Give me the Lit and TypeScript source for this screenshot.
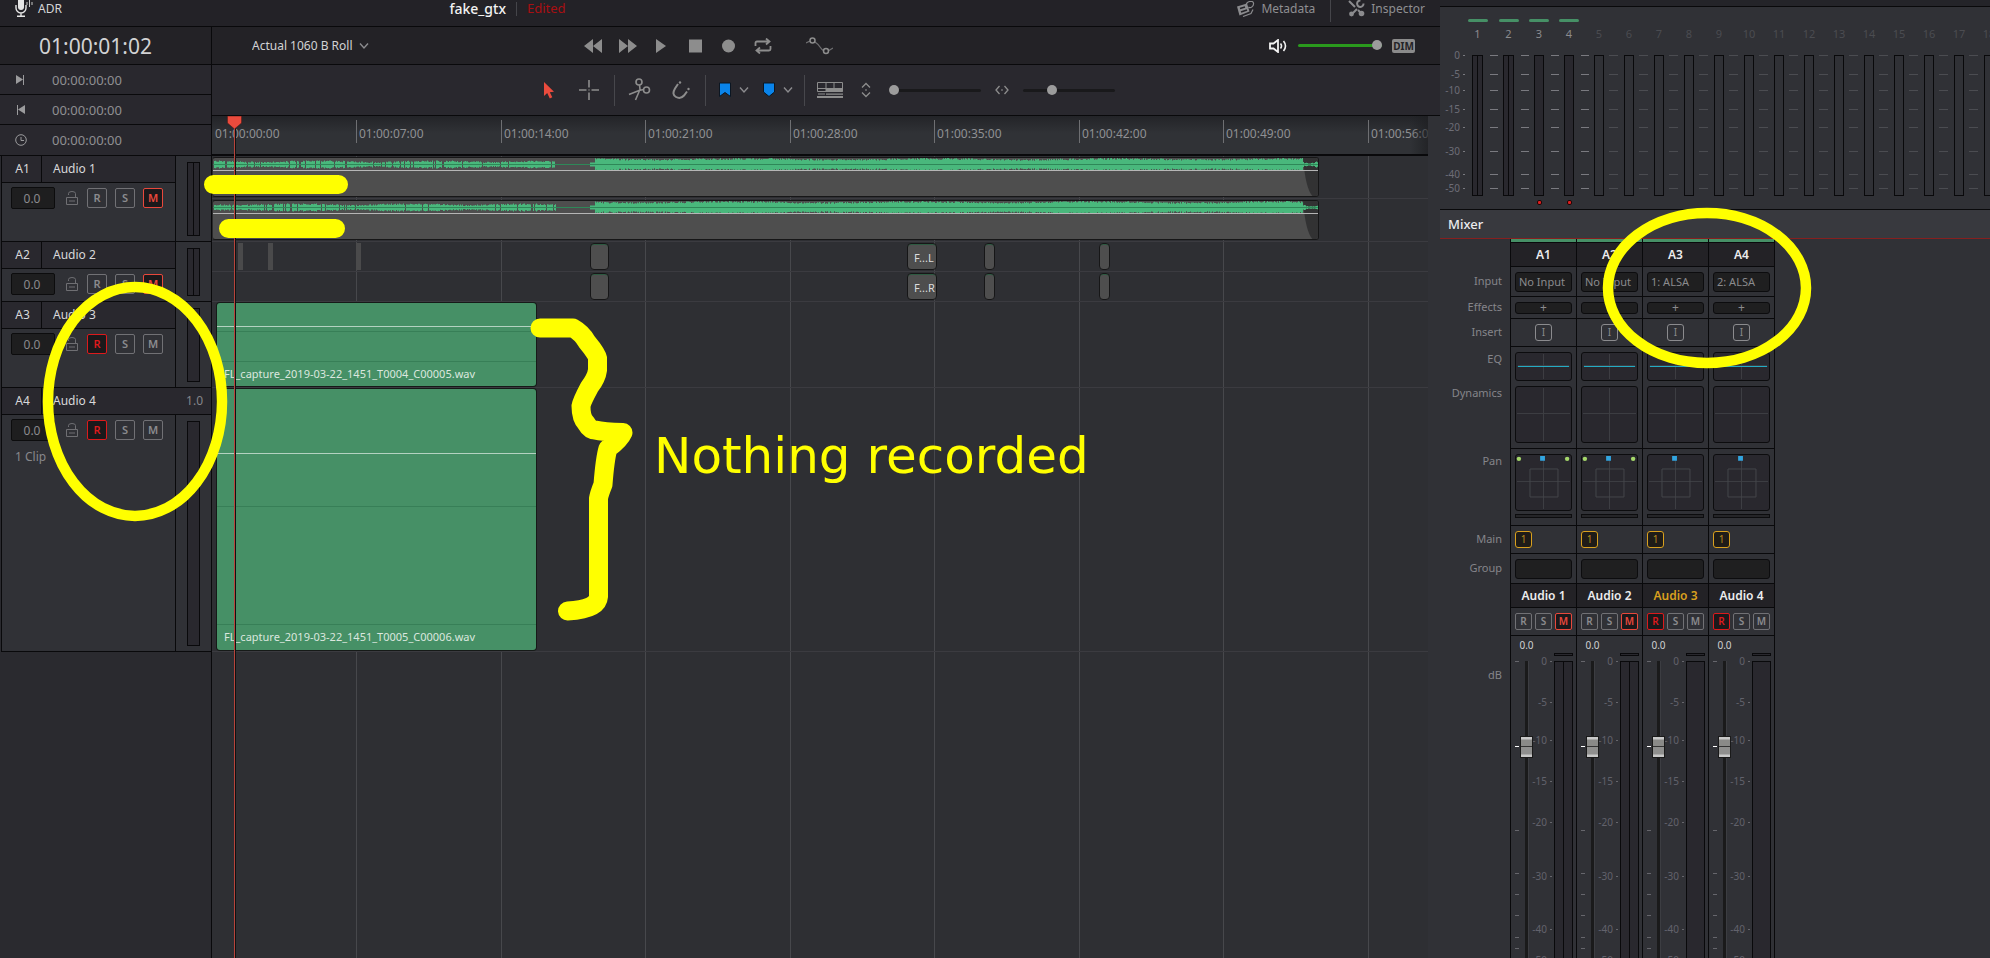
import { LitElement, html, css, svg, nothing } from "lit";
import { customElement, property } from "lit/decorators.js";
import { classMap } from "lit/directives/class-map.js";

const base = css`
  :host { display: block; }
  *, *::before, *::after { box-sizing: border-box; }
  button, input, select {
    font: inherit; color: inherit; margin: 0; padding: 0;
    border: 0; background: none; appearance: none; border-radius: 0; outline: none;
  }
  svg { display: block; flex: none; }
  .rsm {
    display: grid; place-items: center; border: 1px solid #717175; border-radius: 2px;
    color: #8b8b8e; font-weight: 600; flex: none;
  }
  .rsm.mute { color: #e8483c; border-color: #e8483c; background: #1b191b; }
  .rsm.rec { color: #dc1a1c; border-color: #dc1a1c; background: #1b191b; }
`;

interface Track {
  id: string; name: string; stereo: boolean; rec: boolean; mute: boolean;
  height: number; input: string; channels?: string; clips?: string;
}
const tracks: Track[] = [
  { id: "A1", name: "Audio 1", stereo: true, rec: false, mute: true, height: 86, input: "No Input" },
  { id: "A2", name: "Audio 2", stereo: true, rec: false, mute: true, height: 60, input: "No Input" },
  { id: "A3", name: "Audio 3", stereo: false, rec: true, mute: false, height: 86, input: "1: ALSA" },
  { id: "A4", name: "Audio 4", stereo: false, rec: true, mute: false, height: 264, input: "2: ALSA", channels: "1.0", clips: "1 Clip" },
];

const chevron = svg`<path d="M1 1.5 5 6 9 1.5" fill="none" stroke="#8b8b8e" stroke-width="1.4"/>`;

/* ---------- top bars ---------- */
@customElement("top-bars")
class TopBars extends LitElement {
  static styles = [base, css`
    :host { background: #232227; color: #8f8f92; font-size: 13px; line-height: 17px; }
    .title { height: 27px; border-bottom: 1px solid #09090b; display: grid; grid-template-columns: 31% auto 1fr; }
    .title > div { display: flex; height: 17px; align-items: center; }
    .adr { color: #d5d5d7; font-size: 12px; padding-left: 15px; gap: 5px; display: flex; align-items: center; }
    .name { color: #f2f2f2; font-size: 14px; font-weight: 500; padding: 0 10px 0 3px; border-right: 1px solid #45454a; line-height: 14px; }
    .edited { color: #a80f12; font-size: 13px; padding-left: 10px; }
    .tools { justify-content: flex-end; padding-right: 15px; }
    .tools button { display: flex; align-items: center; gap: 6px; font-size: 12px; }
    .tools i { width: 1px; height: 22px; background: #45454a; margin: 5px 17px 0 15px; }
  `];
  render() {
    return html`<header class="title">
      <div><button class="adr">
        <svg width="18" height="17" viewBox="0 0 18 17"><rect x="3" y="-5" width="6" height="15" rx="3" fill="#e6e6e6"/><path d="M1 5v3a5 5 0 0 0 10 0V5M6 13v3M2 16.3h8" fill="none" stroke="#e6e6e6" stroke-width="1.4"/><path d="M12 2v3M14.5 0v7M17 2v3" stroke="#c8c8c8"/></svg>ADR</button></div>
      <div><span class="name">fake_gtx</span><span class="edited">Edited</span></div>
      <div class="tools">
        <button><svg width="19" height="16" viewBox="0 0 19 16"><path d="M1 5.500 11 2.500l2.500 8-10 4Z" fill="#8b8b8e"/><path d="M4 7.500 9 6M5 11l6-2" stroke="#232227" stroke-width="1.600"/><path d="M10 5c0-5 7-6 7.500-3 .5 3-3 6-5 4M7 15.500l8-3 2-4" fill="none" stroke="#8b8b8e" stroke-width="1.200"/></svg>Metadata</button>
        <i></i>
        <button><svg width="17" height="17" viewBox="0 0 17 17"><path d="M1 1l6 6M10 10l5 5M3 15l6-6" stroke="#8b8b8e" stroke-width="2"/><path d="M15.500 3.500a3.200 3.200 0 1 1-3-3" fill="none" stroke="#8b8b8e" stroke-width="2"/><circle cx="3.500" cy="14" r="2.400" fill="#8b8b8e"/><circle cx="13.500" cy="13.500" r="2.800" fill="#8b8b8e"/></svg>Inspector</button>
      </div>
    </header>`;
  }
}

@customElement("transport-bar")
class TransportBar extends LitElement {
  static styles = [base, css`
    .row, .bar { display: flex; align-items: center; }
    .row { height: 38px; background: #232226; border-bottom: 1px solid #09090b; padding-left: 40px; }
    .bar { height: 51px; background: #29282e; border-bottom: 1px solid #09090b; padding-left: 331px; }
    .seq { width: 332px; display: flex; align-items: center; color: #d2d2d4; font-size: 12px; }
    .seq select { width: 107px; line-height: 18px; height: 18px; }
    .keys { display: flex; align-items: center; gap: 17px; flex: 1; }
    .keys .curve { margin-left: 17px; }
    .vol { display: flex; align-items: center; gap: 10px; padding-right: 25px; }
    .dim { width: 23px; height: 14px; border-radius: 2px; background: #8b8b8b; color: #232226; font: 700 10px/14px "Noto Sans"; }
    .sep { width: 1px; height: 31px; background: #47474c; flex: none; }
    .g1 { display: flex; align-items: center; gap: 24px; margin-right: 15px; }
    .g2 { display: flex; align-items: center; gap: 21px; margin: 0 15px 0 13px; }
    .g3 { display: flex; align-items: center; gap: 8px; margin: 0 11px 0 13px; }
    .g3 button:nth-child(2) { margin-right: 6px; }
    .g4 { display: flex; align-items: center; gap: 18px; margin-left: 12px; }
    .wide { margin: 0 -4px; }
    input[type="range"] { height: 12px; width: 92px; }
    input::-webkit-slider-runnable-track { height: 3px; background: #19191b; border-radius: 2px; }
    input::-webkit-slider-thumb { appearance: none; width: 10px; height: 10px; border-radius: 50%; background: #9c9c9c; margin-top: -4px; }
    input.green { width: 84px; }
    input.green::-webkit-slider-runnable-track { background: #2a9a1d; }
  `];
  render() {
    const g = "#8d8d8d";
    return html`
    <div class="row">
      <label class="seq"><select aria-label="Timeline"><option>Actual 1060 B Roll</option></select><svg width="10" height="8">${chevron}</svg></label>
      <div class="keys">
        <button aria-label="Rewind"><svg width="18" height="14"><path d="M9 0v14L0 7ZM18 0v14L9 7Z" fill=${g}/></svg></button>
        <button aria-label="Fast forward"><svg width="18" height="14"><path d="M0 0v14l9-7ZM9 0v14l9-7Z" fill=${g}/></svg></button>
        <button aria-label="Play"><svg width="16" height="14"><path d="M2 0v14l10-7Z" fill=${g}/></svg></button>
        <button aria-label="Stop"><svg width="16" height="14"><path d="M2 .5h13v13H2Z" fill=${g}/></svg></button>
        <button aria-label="Record"><svg width="17" height="14"><circle cx="8.500" cy="7" r="6.500" fill=${g}/></svg></button>
        <button aria-label="Loop"><svg width="18" height="16" viewBox="0 0 18 16"><path d="M1.500 8V5q0-1.500 1.500-1.500h12M12 .5l3.500 3-3.500 3M16.500 8v3q0 1.500-1.500 1.500H3M6 9.500l-3.500 3 3.500 3" fill="none" stroke=${g} stroke-width="1.800"/></svg></button>
        <button class="curve" aria-label="Automation"><svg width="27" height="18" viewBox="0 0 27 18"><path d="M0 6 4 4M9 5q3 2 5 5t4 4M22 14l5-3" fill="none" stroke="#6e6e70" stroke-width="1.300"/><circle cx="6.500" cy="3.500" r="2.500" fill="none" stroke=${g} stroke-width="1.500"/><circle cx="20" cy="14" r="2.500" fill="none" stroke=${g} stroke-width="1.500"/></svg></button>
      </div>
      <div class="vol">
        <button aria-label="Monitor"><svg width="19" height="14" viewBox="0 0 19 14"><path d="M1 4.500h3.500L9 1v12L4.500 9.500H1Z" fill="none" stroke="#f2f2f2" stroke-width="1.800"/><path d="M11.500 4.500q2 2.500 0 5M14.500 2q4 5 0 10" fill="none" stroke="#f2f2f2" stroke-width="1.600"/></svg></button>
        <input class="green" type="range" aria-label="Monitor volume" value="100" />
        <button class="dim">DIM</button>
      </div>
    </div>
    <div class="bar">
      <div class="g1">
        <button aria-label="Select"><svg width="12" height="18"><path d="M1 1v14l3.200-3 2.600 5.500 2.500-1.200-2.500-5 4.200-.5Z" fill="#ea4b3d"/></svg></button>
        <button aria-label="Range"><svg width="20" height="20"><path d="M10 0v7.500M10 12.500V20M0 10h7.500M12.500 10H20M9.500 10h1" stroke=${g} stroke-width="1.600"/></svg></button>
      </div>
      <i class="sep"></i>
      <div class="g2">
        <button aria-label="Razor"><svg width="23" height="24" viewBox="0 0 23 24"><circle cx="11" cy="4" r="3" fill="none" stroke=${g} stroke-width="1.600"/><circle cx="18.500" cy="12" r="3" fill="none" stroke=${g} stroke-width="1.600"/><path d="M11.500 7 12 11.500 7.500 22M15.500 11.500 11 12.500 1 16.500" fill="none" stroke=${g} stroke-width="1.600"/></svg></button>
        <button aria-label="Snapping"><svg width="18" height="20" viewBox="0 0 18 20"><path d="M6 4 3 8.500q-3.500 6 1 8.500t8-1.500l3-4" fill="none" stroke=${g} stroke-width="2"/><circle cx="8" cy="2.500" r="1.200" fill=${g}/><circle cx="16.500" cy="9" r="1.200" fill=${g}/></svg></button>
      </div>
      <i class="sep"></i>
      <div class="g3">
        <button aria-label="Flag"><svg width="12" height="16"><path d="M.5 1h11v13.500L6 10.500.5 14.500Z" fill="#0a84ea" stroke="#0b1622"/></svg></button>
        <button aria-label="Flag colour"><svg width="10" height="8">${chevron}</svg></button>
        <button aria-label="Marker"><svg width="12" height="16"><path d="M.5 1h11v9L6 14.500.5 10Z" fill="#0a84ea" stroke="#0b1622"/></svg></button>
        <button aria-label="Marker colour"><svg width="10" height="8">${chevron}</svg></button>
      </div>
      <i class="sep"></i>
      <div class="g4">
        <button aria-label="Track layout"><svg width="26" height="16" viewBox="0 0 26 16"><path d="M.5.5h25v9H.5ZM9 0v10M17 0v6" fill="none" stroke=${g}/><path d="M9 6h17v3.500H9ZM1 11.500h7v1H1ZM9 11.500h17v1.200H9ZM0 14h26v2H0Z" fill=${g}/><path d="M0 6.500h9" stroke=${g}/></svg></button>
        <svg width="10" height="16"><path d="M1 5.500 5 1.500 9 5.500M1 10.500 5 14.500 9 10.500M4.300 8h1.400" fill="none" stroke=${g} stroke-width="1.300"/></svg>
        <input type="range" aria-label="Vertical zoom" value="0" />
        <svg class="wide" width="14" height="10"><path d="M4.500 1 1 5l3.500 4M9.500 1 13 5 9.500 9M6.300 5h1.400" fill="none" stroke=${g} stroke-width="1.300"/></svg>
        <input type="range" aria-label="Horizontal zoom" value="29" />
      </div>
    </div>`;
  }
}

/* ---------- left column ---------- */
@customElement("counter-panel")
class CounterPanel extends LitElement {
  static styles = [base, css`
    :host { background: #29282e; }
    .big { height: 38px; background: #232226; border-bottom: 1px solid #09090b; color: #d2d2d4; font-size: 21px; line-height: 38px; padding-left: 39px; }
    .tc { height: 30px; border-bottom: 1px solid #09090b; display: flex; align-items: center; color: #8f8f92; font-size: 13px; padding-left: 15px; }
    .tc:last-child { height: 31px; }
    .tc svg { margin-right: 25px; }
  `];
  render() {
    const g = "#9b9b9d";
    return html`<div class="big">01:00:01:02</div>
      <div class="tc"><svg width="12" height="12"><path d="M1 1v9l7-4.500Z" fill=${g}/><path d="M8.500 1v10" stroke=${g}/></svg>00:00:00:00</div>
      <div class="tc"><svg width="12" height="12"><path d="M10 1v9L3 5.500Z" fill=${g}/><path d="M2.500 1v10" stroke=${g}/></svg>00:00:00:00</div>
      <div class="tc"><svg width="12" height="12"><circle cx="6" cy="6" r="5.300" fill="none" stroke=${g}/><path d="M6 3v3.500h3" fill="none" stroke=${g}/></svg>00:00:00:00</div>`;
  }
}

@customElement("track-head")
class TrackHead extends LitElement {
  @property({ attribute: false }) track!: Track;
  static styles = [base, css`
    .track { display: grid; grid-template-columns: 1fr 35px; grid-template-rows: 27px 1fr; background: #303136; border-bottom: 1px solid #09090b; margin-left: 1px; border-left: 1px solid #09090b; font-size: 12px; height: 100%; }
    .head { grid-column: 1; display: flex; line-height: 26px; background: #29282e; color: #d8d8da; border-bottom: 1px solid #09090b; border-right: 1px solid #09090b; }
    .wide .head { grid-column: 1 / 3; border-right: 0; }
    .id { width: 40px; flex: none; padding-left: 2px; text-align: center; border-right: 1px solid #09090b; }
    .name { padding-left: 11px; flex: 1; }
    .ch { color: #85858a; padding-right: 8px; }
    .body { grid-column: 1; border-right: 1px solid #09090b; padding: 4px 0 0 9px; }
    .line { display: flex; align-items: center; gap: 8px; }
    .gain { width: 44px; height: 22px; background: #1e1e1f; border: 1px solid #0c0c0d; border-radius: 2px; text-align: center; color: #8b8b8e; margin-right: 3px; padding-right: 2px; }
    .lock { margin-right: 1px; }
    .rsm { width: 20px; height: 20px; font-size: 11px; line-height: 18px; }
    .clips { color: #88888c; padding: 7px 4px; line-height: 18px; }
    .side { grid-column: 2; grid-row: 1 / 3; padding: 6px 11px 5px; display: flex; }
    .wide .side { grid-row: 2; }
    .meter { flex: 1; background: #29282e; border: 1px solid #09090b; display: flex; }
    .meter i { flex: 1; border-right: 1px solid #09090b; }
    .meter i:last-child { border-right: 0; }
  `];
  render() {
    const t = this.track;
    return html`<section class=${classMap({ track: true, wide: !!t.channels })}>
      <div class="head"><span class="id">${t.id}</span><span class="name">${t.name}</span>${t.channels ? html`<span class="ch">${t.channels}</span>` : nothing}</div>
      <div class="body">
        <div class="line">
          <input class="gain" type="text" value="0.0" aria-label="${t.name} gain" />
          <button class="lock" aria-label="Lock"><svg width="12" height="14"><path d="M.5 6.500h11v7H.5ZM2.500 4V2.500q0-2 3.500-2t3.500 2v4M3 10h6" fill="none" stroke="#6f6f73"/></svg></button>
          <button class=${classMap({ rsm: true, rec: t.rec })}>R</button>
          <button class="rsm">S</button>
          <button class=${classMap({ rsm: true, mute: t.mute })}>M</button>
        </div>
        ${t.clips ? html`<div class="clips">${t.clips}</div>` : nothing}
      </div>
      <div class="side"><div class="meter"><i></i>${t.stereo ? html`<i></i>` : nothing}</div></div>
    </section>`;
  }
}

/* ---------- timeline ---------- */
const TICK = 289; // pixels per fourteen seconds
const marks = ["00", "07", "14", "21", "28", "35", "42", "49", "56"].map((s, i) => ({
  label: `01:00:${s}:00`, x: Math.floor((i * TICK) / 2),
}));

const MID = 6.5;
function waveform(seed: number): string {
  let s = seed;
  const rnd = () => ((s = (s * 16807) % 2147483647) / 2147483647);
  let up = `M0 ${MID}`, down = "";
  for (let x = 0; x < 1106; x++) {
    let a: number;
    if (x < 343) {
      const swell = 1.2 + Math.abs(Math.sin(x / 37 + seed)) * 1.3;
      a = rnd() < 0.1 ? 0.6 : swell + rnd() * 1.6;
    } else if (x < 377) a = 0.5;
    else if (x < 382) a = 2;
    else if (x < 1090) a = 4.2 + Math.sin(x / 29 + seed) * 0.5 + rnd() * 1.9;
    else a = 1 + (Math.abs(x - 1096) / 3) * rnd();
    up += `L${x} ${(MID - a).toFixed(1)}L${x + 1} ${(MID - a).toFixed(1)}`;
    down = `L${x + 1} ${(MID + a).toFixed(1)}L${x} ${(MID + a).toFixed(1)}` + down;
  }
  return up + down + "Z";
}

@customElement("time-line")
class TimeLine extends LitElement {
  static styles = [base, css`
    :host { position: relative; background: #2e2f33; overflow: hidden; display: flex; flex-direction: column; }
    .ruler { height: 40px; flex: none; position: relative; overflow: hidden; border-bottom: 2px solid #09090b; background: linear-gradient(#232428, #303236 45%); }
    .mark { position: absolute; top: 4px; height: 23px; padding: 5px 0 0 2px; border-left: 1px solid #6e6f72; color: #8f9093; font-size: 12px; line-height: 18px; white-space: nowrap; }
    .mark:first-child { border-color: transparent; }
    .fade { position: absolute; inset: 0 0 0 auto; width: 18px; background: linear-gradient(90deg, #1d1e2100, #1d1e21b0); }
    .lanes { position: relative; flex: 1; }
    .grid { position: absolute; top: 0; bottom: 0; width: 1px; background: #47484c; }
    .lane { position: relative; border-bottom: 1px solid #3b3b40; }
    .clip { position: absolute; top: 1px; bottom: 1px; border-radius: 3px; overflow: hidden; }
    .gray { background: #4e4e4e; border: 1px solid #161617; border-left-color: #2a2a2b; }
    .small { background: #4e4e4e; border: 1px solid #161617; border-radius: 4px; color: #dcdcdc; font-size: 11px; line-height: 28px; padding-left: 6px; white-space: nowrap; box-shadow: inset 0 1px #2d5a41; }
    .sliver { background: #4a4a4b; border-radius: 0; }
    .green { background: #469066; box-shadow: 0 0 0 1px #161a18; display: grid; color: #dbe7df; font-size: 11px; }
    .green .level { border-bottom: 1px solid #b4d2c1; }
    .green .mid, .green .low { border-bottom: 1px solid #377f57; }
    .green .label { padding-left: 7px; line-height: 24px; }
    .green.a3 { grid-template-rows: 24px 5px 30px 1fr; }
    .green.a4 { grid-template-rows: 65px 53px 118px 1fr; }
    .head { position: absolute; top: 0; left: 15px; width: 15px; height: 100%; }
    .head::before { content: ""; position: absolute; left: 7px; top: 10px; bottom: 0; width: 2px; background: linear-gradient(90deg, #b7443c 50%, #111 50%); }
    .head svg { position: relative; }
  `];
  private stereoClip(seed: number) {
    return html`<div class="clip gray" style="left:0px;width:1107px">
      <svg width="1106" height="40"><path d="M1090 0q3 36 12 40h4V0Z" fill="#323233"/>
      <path d=${waveform(seed)} fill="#49b87c"/><path d="M0 6.500h1106" stroke="#2e8858"/><path d="M0 12.500h1106" stroke="#b5b5b5"/></svg></div>`;
  }
  private smallRow(channel: string) {
    const clips = [[378, 19, ""], [695, 30, "F..." + channel], [772, 11, ""], [887, 11, ""]] as [number, number, string][];
    const slivers = channel === "L" ? [26, 56, 144] : [];
    return html`${clips.map(([x, w, t]) => html`<div class="clip small" style="left:${x}px;width:${w}px">${t}</div>`)}
      ${slivers.map((x) => html`<div class="clip sliver" style="left:${x}px;width:5px"></div>`)}`;
  }
  render() {
    return html`
      <div class="ruler">${marks.map((m) => html`<span class="mark" style="left:${m.x}px">${m.label}</span>`)}<div class="fade"></div></div>
      <div class="lanes">
        ${marks.slice(1).map((m) => html`<i class="grid" style="left:${m.x}px"></i>`)}
        <div class="lane" style="height:43px">${this.stereoClip(71)}</div>
        <div class="lane" style="height:43px">${this.stereoClip(1234)}</div>
        <div class="lane" style="height:30px">${this.smallRow("L")}</div>
        <div class="lane" style="height:30px">${this.smallRow("R")}</div>
        <div class="lane" style="height:86px"><div class="clip green a3" style="left:5px;width:319px"><i class="level"></i><i class="mid"></i><i class="low"></i><span class="label">FL_capture_2019-03-22_1451_T0004_C00005.wav</span></div></div>
        <div class="lane" style="height:264px"><div class="clip green a4" style="left:5px;width:319px"><i class="level"></i><i class="mid"></i><i class="low"></i><span class="label">FL_capture_2019-03-22_1451_T0005_C00006.wav</span></div></div>
      </div>
      <div class="head"><svg width="15" height="13"><path d="M.5 0h14v7l-7 6-7-6Z" fill="#ea4b3d" stroke="#5a1c17" stroke-width=".6"/></svg></div>`;
  }
}

/* ---------- meters ---------- */
@customElement("meter-bridge")
class MeterBridge extends LitElement {
  static styles = [base, css`
    :host { border-top: 1px solid #09090b; border-bottom: 1px solid #09090b; background: #303136; overflow: hidden; font-size: 11px; }
    .bridge { display: flex; height: 202px; padding-top: 12px; }
    .scale { width: 20px; text-align: right; color: #6d6d76; font-size: 10px; line-height: 14px; padding-top: 29px; flex: none; }
    .dash { width: 6px; padding: 36px 1px 0 3px; flex: none; margin-right: 6px; }
    .dash i, .ticks i { display: block; }
    .dash i::before, .ticks i::before { content: ""; display: block; height: 1px; background: #7a7a80; }
    .cell { display: grid; grid-template-columns: 10px 9px; column-gap: 6px; grid-template-rows: 3px 23px 10px 141px 12px; width: 30px; flex: none; color: #8b8b8e; justify-items: center; }
    .cell.stereo { width: 31px; grid-template-columns: 11px 9px; }
    .cell.off { color: #4b4c51; column-gap: 5px; }
    .cell > * { grid-column: 1; }
    .on { width: 20px; height: 3px; border-radius: 2px; background: #469066; }
    .num { grid-row: 2; line-height: 23px; width: 20px; text-align: center; }
    .bar { grid-row: 4; width: 100%; background: #29282e; border: 1px solid #09090b; display: flex; }
    .off .bar { background: #303136; }
    .stereo .bar::before { content: ""; flex: 1; border-right: 1px solid #09090b; margin-right: 4px; }
    .ticks { grid-column: 2; grid-row: 4; width: 8px; }
    .off .ticks { width: 9px; }
    .off .ticks i::before { background: #4b4c51; }
    .arm { grid-row: 5; width: 5px; height: 5px; border-radius: 2px; background: #e21e1e; border: 1px solid #1c0808; align-self: end; margin-bottom: 3px; }
  `];
  render() {
    const steps: [string, number][] = [["0", 19], ["-5", 16], ["-10", 19], ["-15", 18], ["-20", 24], ["-30", 23], ["-40", 14], ["-50", 14]];
    const ticks = steps.map(([, h]) => html`<i style="height:${h}px"></i>`);
    return html`<div class="bridge">
      <div class="scale">${steps.map(([l, h]) => html`<div style="height:${h}px">${l}</div>`)}</div>
      <div class="dash">${ticks}</div>
      ${Array.from({ length: 18 }, (_, i) => html`<div class=${classMap({ cell: true, stereo: i < 2, off: i > 3 })}>
        ${i < 4 ? html`<i class="on"></i>` : nothing}<span class="num">${i + 1}</span><i class="bar"></i><div class="ticks">${ticks}</div>
        ${i === 2 || i === 3 ? html`<i class="arm"></i>` : nothing}</div>`)}
    </div>`;
  }
}

/* ---------- mixer ---------- */
@customElement("mixer-strip")
class MixerStrip extends LitElement {
  @property({ attribute: false }) track!: Track;
  static styles = [base, css`
    :host { width: 66px; flex: none; border-right: 1px solid #09090b; font-size: 11px; color: #8b8b8e; }
    .color { height: 4px; background: #469066; border-bottom: 1px solid #09090b; }
    .cap { height: 24px; border-bottom: 1px solid #09090b; background: #232226; color: #ececee; font-weight: 600; text-align: center; line-height: 24px; font-size: 12px; }
    .cap.sel { color: #d9a01e; }
    .row { padding: 5px 4px 4px; border-bottom: 1px solid #09090b; }
    .row.tall { padding-bottom: 5px; }
    .box { display: block; width: 57px; background: #1f1f20; border: 1px solid #0c0c0e; border-radius: 3px; }
    .in { height: 20px; line-height: 18px; padding-left: 3px; }
    .fx { height: 12px; line-height: 10px; font-size: 12px; text-align: center; }
    .ins { display: flex; justify-content: center; padding-bottom: 5px; }
    .ins.start { justify-content: flex-start; }
    .sq { width: 17px; height: 17px; border: 1px solid #8b8b8e; border-radius: 3px; line-height: 15px; font-size: 10px; text-align: center; }
    .main { border-color: #d9a01e; color: #b98a1e; background: #1f1c18; }
    .plot { display: block; border: 1px solid #0c0c0e; border-radius: 3px; background: #29282e; }
    .plot + .plot { margin-top: 5px; }
    .thin { height: 4px; border: 1px solid #0c0c0e; background: #252528; margin: 3px 0 2px; }
    .btns { display: flex; gap: 3px; padding-bottom: 5px; }
    .rsm { width: 17px; height: 17px; font-size: 10px; line-height: 15px; }
    .fader { display: grid; grid-template-columns: 4px 14px 14px 3px 19px; grid-template-rows: 17px 8px 340px; padding-left: 4px; column-gap: 1px; }
    .db { grid-column: 1 / 3; line-height: 18px; font-size: 10px; color: #cfcfd2; text-align: center; padding-left: 4px; }
    .peak { grid-column: 5; grid-row: 2; height: 3px; border: 1px solid #09090b; background: #29282e; }
    .ticks, .dash { grid-row: 3; grid-column: 1; }
    .ticks i, .dash i { display: block; }
    .ticks i::before, .dash i::before { content: ""; display: block; height: 1px; background: #66666c; }
    .ticks i.hot::before { background: #fff; }
    .dash { grid-column: 4; padding-right: 1px; }
    input { grid-row: 3; grid-column: 2; width: 14px; height: 340px; margin-top: -5px; writing-mode: vertical-lr; direction: rtl; }
    input::-webkit-slider-runnable-track { width: 4px; margin: 5px auto 0; background: linear-gradient(90deg, #1a1a1b 3px, #3c3d42 3px); }
    input::-webkit-slider-thumb { appearance: none; width: 13px; height: 22px; margin-left: -5px; border: 1px solid #1a1a1a; background: linear-gradient(#c9c9c9 0 2px, #8a8a88 3px 9px, #333 9px 10px, #8f8f8e 10px 17px, #c8c8c8 18px); }
    .nums { grid-row: 3; grid-column: 2 / 4; text-align: right; color: #62626c; font-size: 10px; line-height: 14px; margin-top: -7px; padding-right: 2px; }
    .meter { grid-row: 3; grid-column: 5; background: #29282e; border: 1px solid #09090b; display: flex; }
    .stereo .meter::before { content: ""; width: 9px; border-right: 1px solid #09090b; }
  `];
  private cross(h: number, extra: unknown = nothing) {
    return html`<svg class="plot" width="57" height=${h} viewBox="1 1 57 ${h}"><path d="M29.500 2v${h - 2}M2 ${Math.floor(h / 2) + 0.5}h55" stroke="#3e3f44"/>${extra}</svg>`;
  }
  render() {
    const t = this.track;
    const nums: [string, number][] = [["0", 41], ["-5", 38], ["-10", 41], ["-15", 41], ["-20", 54], ["-30", 53], ["-40", 31], ["-50", 20]];
    const left: [number, boolean][] = [[85, false], [84, true], [43, false], [21, false], [21, false], [22, false], [11, false], [20, false]];
    return html`
      <div class="color"></div><div class="cap">${t.id}</div>
      <div class="row"><select class="box in" aria-label="Input"><option>${t.input}</option></select></div>
      <div class="row"><button class="box fx" aria-label="Add effect">+</button></div>
      <div class="row ins"><button class="sq">I</button></div>
      <div class="row tall">${this.cross(29, svg`<path d="M2 15.500h55" stroke="#23b6cf"/>`)}${this.cross(57)}</div>
      <div class="row tall">${this.cross(57, svg`<path d="M15.500 15.500h29v29h-29Z" fill="none" stroke="#45464b"/><path d="M26 2h5v5h-5Z" fill="#32a5e0"/>${t.stereo ? svg`<circle cx="4" cy="5" r="2.300" fill="#a5d86a"/><circle cx="54" cy="5" r="2.300" fill="#a5d86a"/>` : nothing}`)}<div class="thin"></div></div>
      <div class="row ins start"><button class="sq main">1</button></div>
      <div class="row"><button class="box in" aria-label="Group"></button></div>
      <div class=${classMap({ cap: true, sel: t.id === "A3" })}>${t.name}</div>
      <div class="row btns"><button class=${classMap({ rsm: true, rec: t.rec })}>R</button><button class="rsm">S</button><button class=${classMap({ rsm: true, mute: t.mute })}>M</button></div>
      <div class=${classMap({ fader: true, stereo: t.stereo })}>
        <span class="db">0.0</span><i class="peak"></i>
        <div class="ticks">${left.map(([h, hot]) => html`<i class=${hot ? "hot" : ""} style="height:${h}px"></i>`)}</div>
        <div class="nums">${nums.map(([l, h]) => html`<div style="height:${h}px">${l}</div>`)}</div>
        <input type="range" aria-label="${t.name} level" step="any" value="76" />
        <div class="dash">${nums.map(([, h]) => html`<i style="height:${h}px"></i>`)}</div>
        <div class="meter"></div>
      </div>`;
  }
}

@customElement("mixer-panel")
class MixerPanel extends LitElement {
  static styles = [base, css`
    :host { background: #303136; display: flex; flex-direction: column; min-height: 0; overflow: hidden; }
    h2 { margin: 0; height: 29px; flex: none; background: #38393e; border-bottom: 1px solid #86201f; color: #ececee; font-size: 13px; font-weight: 500; line-height: 28px; padding-left: 8px; }
    .desk { display: flex; }
    .labels { width: 71px; flex: none; border-right: 1px solid #09090b; text-align: right; padding: 33px 8px 0 0; color: #85858a; font-size: 11px; line-height: 18px; }
    .labels div { white-space: nowrap; }
  `];
  render() {
    const rows: [string, number][] = [["Input", 26], ["Effects", 25], ["Insert", 27], ["EQ", 34], ["Dynamics", 68], ["Pan", 78], ["Main", 29], ["Group", 107], ["dB", 18]];
    return html`<h2>Mixer</h2><div class="desk">
      <div class="labels">${rows.map(([l, h]) => html`<div style="height:${h}px">${l}</div>`)}</div>
      ${tracks.map((t) => html`<mixer-strip .track=${t}></mixer-strip>`)}
    </div>`;
  }
}

/* ---------- page ---------- */
@customElement("app-root")
class AppRoot extends LitElement {
  static styles = [base, css`
    :host { position: relative; height: 100vh; overflow: hidden; background: #303136; font-family: "Noto Sans", sans-serif; }
    .app { display: grid; grid-template-columns: minmax(0, 1fr) 550px; height: 100%; }
    .edit { display: grid; grid-template-columns: 212px minmax(0, 1fr); grid-template-rows: auto auto minmax(0, 1fr); min-height: 0; }
    top-bars { grid-column: 1 / 3; }
    .left { grid-row: 2 / 4; border-right: 1px solid #09090b; background: #2a2a2f; min-height: 0; overflow: hidden; }
    time-line { margin-right: 12px; }
    .right { display: grid; grid-template-rows: 6px auto minmax(0, 1fr); background: #242429; min-height: 0; }
    .notes { position: absolute; left: 0; top: 0; pointer-events: none; }
    .notes text { font: 50px "DejaVu Sans", sans-serif; fill: #ff0; }
  `];
  render() {
    return html`<div class="app">
      <main class="edit">
        <top-bars></top-bars>
        <aside class="left"><counter-panel></counter-panel>
          ${tracks.map((t) => html`<track-head .track=${t} style="height:${t.height}px"></track-head>`)}
        </aside>
        <transport-bar></transport-bar>
        <time-line></time-line>
      </main>
      <aside class="right"><div></div><meter-bridge></meter-bridge><mixer-panel></mixer-panel></aside>
    </div>
    <svg class="notes" width="1990" height="958" fill="none" stroke="#ff0" stroke-linecap="round" stroke-linejoin="round">
      <ellipse cx="135" cy="401.500" rx="87" ry="114.500" stroke-width="10.500"/>
      <ellipse cx="1707" cy="288" rx="99" ry="75" stroke-width="10.500"/>
      <path d="M213.500 184.500h125M228.500 228.500h107" stroke-width="19"/>
      <path d="M540 328h33q9 5 14 14 10 12 10.500 16v12q-1 8-8 17-8 15-8.500 19 0 12 5 17 4 7 9 7 8 2 28 2.500-3 7-15 16-3 10-5 36-4 10-4.500 14v98q-1 13-31 14.500" stroke-width="19"/>
      <text x="654" y="473" stroke="none">Nothing recorded</text>
    </svg>`;
  }
}
